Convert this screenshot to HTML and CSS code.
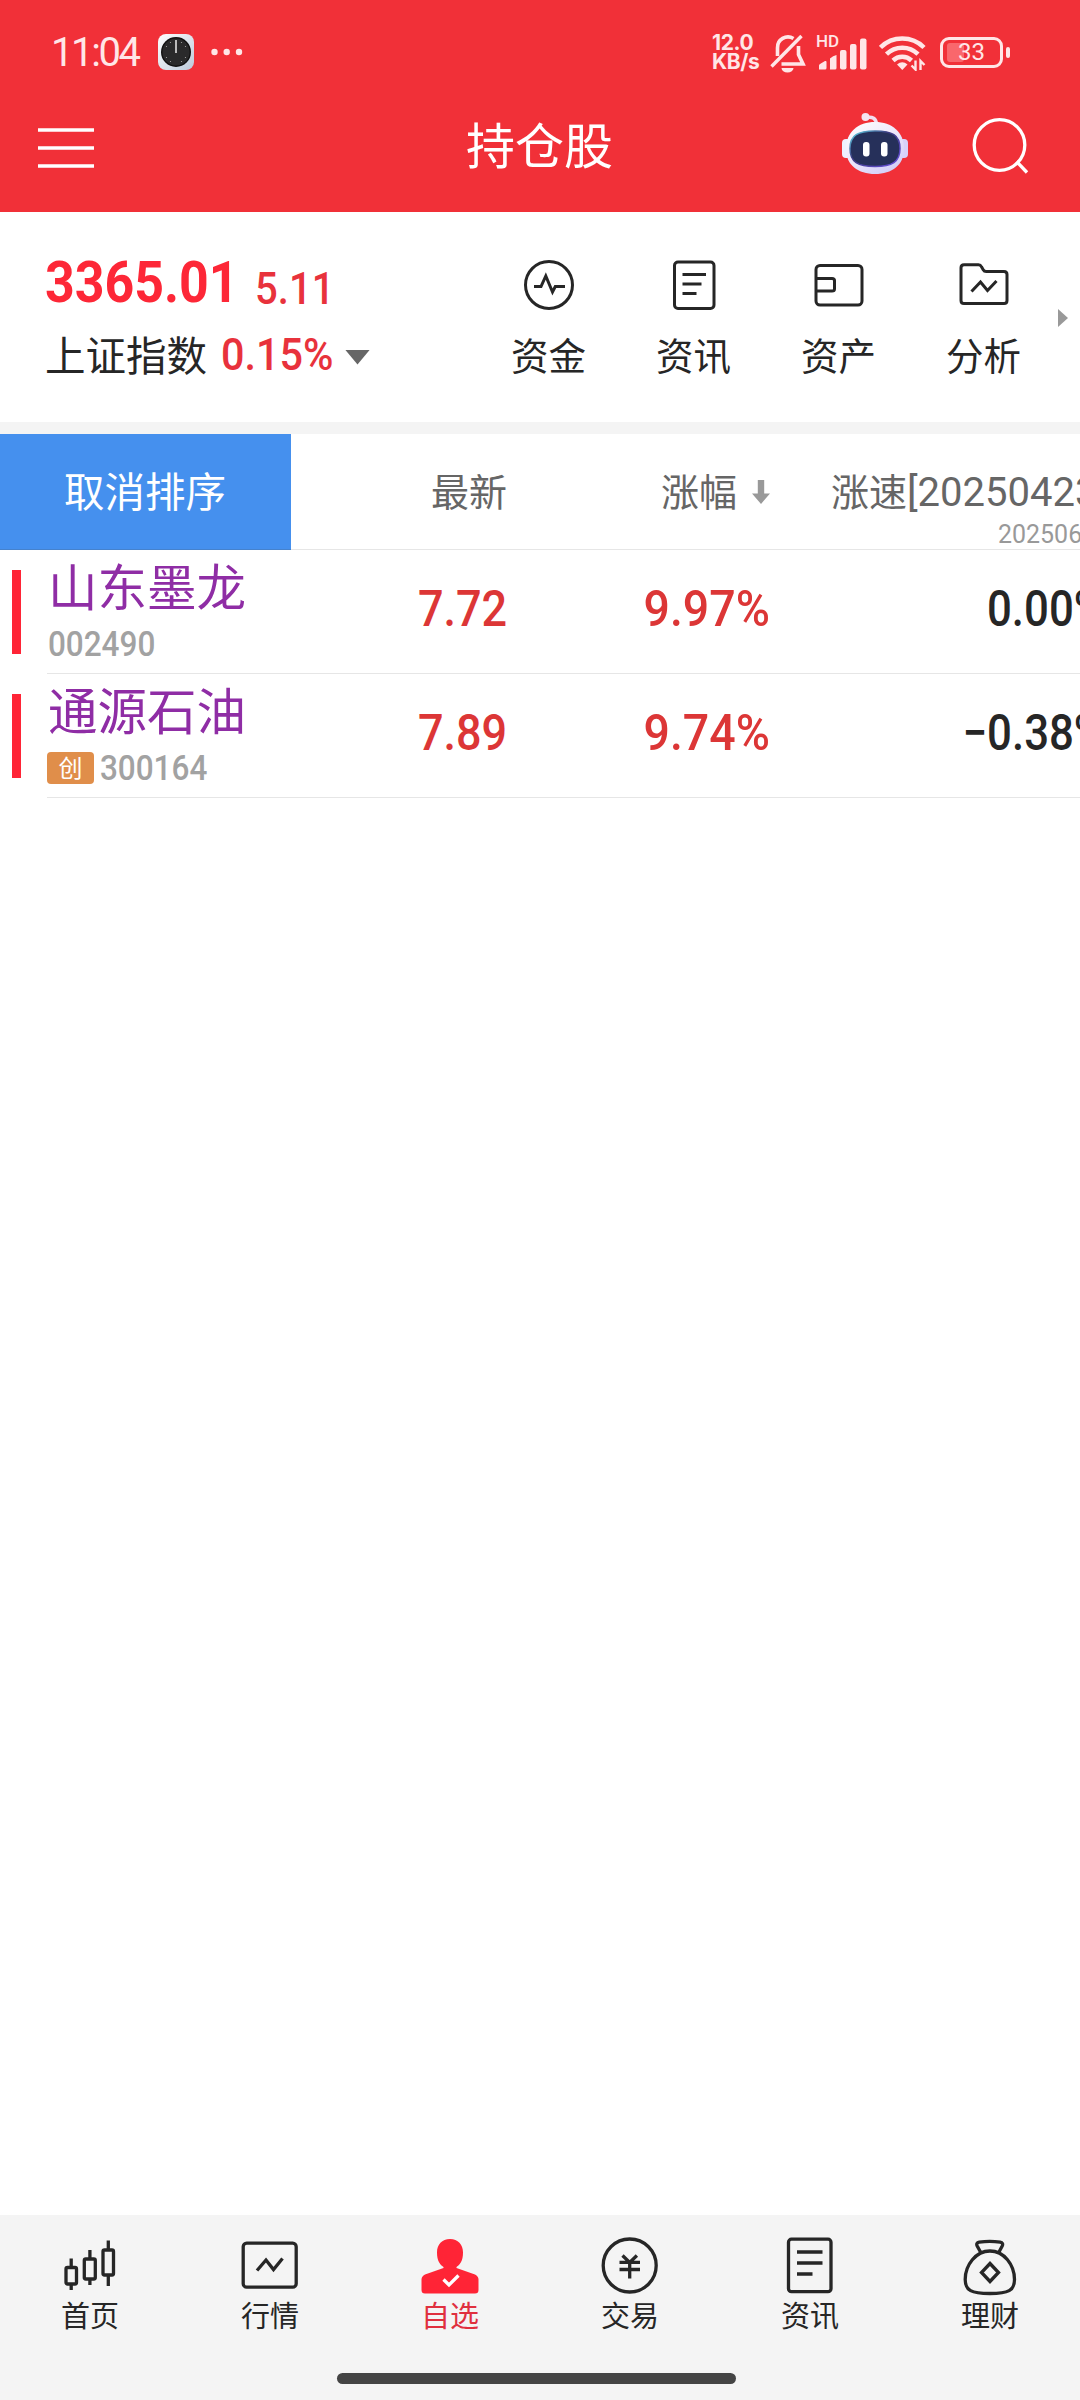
FILE: index.html
```html
<!DOCTYPE html>
<html lang="zh-CN">
<head>
<meta charset="utf-8">
<title>持仓股</title>
<link rel="stylesheet" href="styles.css">
</head>
<body>
<div class="app">
  <header class="top">
    <div class="status">
      <span class="time">11:04</span>
      <svg class="clock" width="36" height="36" viewBox="0 0 36 36">
        <defs><linearGradient id="cg" x1="0" y1="0" x2="1" y2="1"><stop offset="0" stop-color="#fff"/><stop offset="1" stop-color="#bccada"/></linearGradient></defs>
        <rect width="36" height="36" rx="8" fill="url(#cg)"/>
        <circle cx="18" cy="18" r="15" fill="#111"/><circle cx="18" cy="18" r="13.6" fill="#2a2a2b"/>
        <path d="M18 6v13" stroke="#bbb" stroke-width="2"/>
        <g fill="#aaa"><circle cx="8.500" cy="12.500" r=".6"/><circle cx="12.500" cy="8.500" r=".6"/><circle cx="23.500" cy="8.500" r=".6"/><circle cx="27.500" cy="12.500" r=".6"/><circle cx="8.500" cy="23.500" r=".6"/><circle cx="12.500" cy="27.500" r=".6"/><circle cx="23.500" cy="27.500" r=".6"/><circle cx="27.500" cy="23.500" r=".6"/></g>
      </svg>
      <svg class="dots" width="32" height="8" viewBox="0 0 32 8" fill="#ffe6e7"><circle cx="3.500" cy="4" r="3.200"/><circle cx="15.700" cy="4" r="3.200"/><circle cx="28" cy="4" r="3.200"/></svg>
      <div class="speed"><span>12.0</span><span>KB/s</span></div>
      <svg class="bell" width="36" height="40" viewBox="0 0 36 40" fill="none" stroke="#ffe6e7" stroke-width="3.600">
        <path d="M7.500 23V15a10.500 10.500 0 0 1 16-9.500M28.500 13v8.500l4.500 9.500H11.500"/><path d="M1.500 33.500L31.500 3" stroke-width="3.400"/>
        <path d="M11.500 35h12a6 4.500 0 0 1-12 0z" fill="#ffe6e7" stroke="none"/>
      </svg>
      <div class="signal">
        <span class="hd">HD</span>
        <svg width="48" height="32" viewBox="0 0 48 32" fill="#ffe6e7"><path d="M0 31.500v-4q0-1 1-1.500l5-3q1.500-.5 1.500 1v6q0 1.500-1.500 1.500zM11 31.500v-11q3-3 6.500-3.500v13q0 1.500-1.500 1.500z"/><rect x="21" y="12" width="6.500" height="19.500" rx="2"/><rect x="31" y="6" width="6.500" height="25.500" rx="2"/><rect x="41" y="0.500" width="6.500" height="31" rx="2"/></svg>
      </div>
      <svg class="wifi" width="48" height="36" viewBox="0 0 48 36" fill="none" stroke="#ffe6e7" stroke-width="4.500">
        <path d="M1.500 12.500a31 31 0 0 1 43.500 0M7.500 19.200a22.500 22.500 0 0 1 31.500 0M14 25.500a13.500 13.500 0 0 1 18.500 0"/>
        <path d="M18 29.500q5.200-4.500 10.500 0l-5.200 5.500z" fill="#ffe6e7" stroke="none"/>
        <path d="M36.500 25.500v9l-4-4M41.500 35v-9l4 4" stroke-width="2.400"/>
      </svg>
      <div class="battery"><span class="cell"><i class="level"></i><b>33</b></span><i class="nub"></i></div>
    </div>
    <div class="titlebar">
      <svg class="menu" width="56" height="40" viewBox="0 0 56 40"><path d="M0 2h56M0 20h56M0 38h56" stroke="#fff" stroke-width="3.600"/></svg>
      <h1>持仓股</h1>
      <svg class="robot" width="68" height="64" viewBox="0 0 68 64">
        <defs><linearGradient id="rg" x1="0" y1="0" x2=".7" y2="1"><stop offset="0" stop-color="#fff"/><stop offset=".5" stop-color="#efe9fc"/><stop offset="1" stop-color="#d3cff8"/></linearGradient>
        <linearGradient id="rb" x1="0" y1="0" x2="1" y2="1"><stop offset="0" stop-color="#62dce9"/><stop offset=".4" stop-color="#3b3a80"/><stop offset="1" stop-color="#6a4fe0"/></linearGradient></defs>
        <path d="M25 5.500q10-2 10.500 7" fill="none" stroke="#f2dff0" stroke-width="3.500"/><circle cx="24.500" cy="5" r="4" fill="#f4e4f2"/>
        <rect x="1" y="27" width="9" height="19" rx="4" fill="#eef0ff"/><rect x="58" y="27" width="9" height="19" rx="4" fill="#d8d2fa"/>
        <path d="M34 10c17 0 29 10 29 27 0 16-12 25-29 25S5 53 5 37C5 20 17 10 34 10z" fill="url(#rg)"/>
        <path d="M34 19c17 0 25 4 25 17.500C59 50 51 54.500 34 54.500S9 50 9 36.500C9 23 17 19 34 19z" fill="#26305a" stroke="url(#rb)" stroke-width="1.500"/>
        <rect x="22" y="30" width="6.500" height="14.500" rx="3" fill="#fff"/><rect x="40" y="30" width="6.500" height="14.500" rx="3" fill="#fff"/>
      </svg>
      <svg class="search" width="58" height="58" viewBox="0 0 58 58" fill="none" stroke="#fff" stroke-width="3.300"><circle cx="27.500" cy="28" r="25.300"/><path d="M44.500 44.500L55 55.500"/></svg>
    </div>
  </header>

  <section class="summary">
    <div class="index">
      <div class="line1"><span class="num price">3365.01</span><span class="num change">5.11</span></div>
      <div class="line2"><span class="iname">上证指数</span><span class="num pct">0.15%</span><i class="caret"></i></div>
    </div>
    <nav class="quick">
      <a><svg viewBox="0 0 52 52"><circle cx="26" cy="26" r="23.500"/><path d="M11 27.500h7l4.800-10.500 6.700 16 2.800-5.500H42"/></svg>资金</a>
      <a><svg viewBox="0 0 52 52"><rect x="6.500" y="3" width="39.500" height="46.500" rx="3.500"/><path d="M14.500 15.500h23.500M14.500 25h19M14.500 34.500h14"/></svg>资讯</a>
      <a><svg viewBox="0 0 52 52"><rect x="3" y="6.500" width="46" height="39.500" rx="4"/><path d="M3 19.500h16q2.500 0 2.500 2v8.500q0 2-2.500 2H3"/></svg>资产</a>
      <a><svg viewBox="0 0 52 52"><path d="M6 5.800h14.500q2 0 3 2l1.700 2.900q1 1.800 3 1.800H46q3 0 3 3V41.500q0 3-3 3H6q-3 0-3-3V8.800q0-3 3-3z"/><path d="M13.500 32.500l9-9.500 7 8.500L38.500 22"/></svg>分析</a>
    </nav>
    <i class="more"></i>
  </section>

  <main class="table">
    <div class="row head">
      <div class="cancel">取消排序</div>
      <div class="cell-r">最新</div>
      <div class="cell-r sort">涨幅<svg width="18" height="24" viewBox="0 0 18 24"><path d="M5.800 0h6.400v13.500H18L9 24 0 13.500h5.800z" fill="#999"/></svg></div>
      <div class="speedcol"><span class="t">涨速<span class="num">[20250423]</span></span><span class="num sub">20250610</span></div>
    </div>
    <div class="row stock">
      <div class="who"><i class="mark"></i><div class="names"><span class="sname">山东墨龙</span><span class="code"><span class="num">002490</span></span></div></div>
      <div class="val"><span class="num up">7.72</span></div>
      <div class="val"><span class="num up">9.97%</span></div>
      <div class="val"><span class="num">0.00%</span></div>
    </div>
    <div class="row stock">
      <div class="who"><i class="mark"></i><div class="names"><span class="sname">通源石油</span><span class="code"><em>创</em><span class="num">300164</span></span></div></div>
      <div class="val"><span class="num up">7.89</span></div>
      <div class="val"><span class="num up">9.74%</span></div>
      <div class="val"><span class="num">−0.38%</span></div>
    </div>
  </main>

  <footer class="bottom">
    <nav class="tabs">
      <a><svg viewBox="0 0 60 60"><g><rect x="6" y="31.500" width="10.500" height="16.500" rx="1.500"/><rect x="24.300" y="23" width="11" height="20" rx="1.500"/><rect x="43" y="14" width="10.500" height="25" rx="1.500"/></g><path d="M11.200 22.500v9M11.200 48v6M29.900 14v9M29.900 43v6M48.300 4.500v9.500M48.300 39v11"/></svg>首页</a>
      <a><svg viewBox="0 0 60 60"><rect x="3.200" y="7.200" width="53" height="44" rx="3.500"/><path d="M17 34.500l9-10.500 7.500 9.500L42.500 22.500"/></svg>行情</a>
      <a class="on"><svg viewBox="0 0 60 60"><path class="solid" d="M30 3c8 0 13 5.500 13 13.500 0 8.500-3 12-6.500 14.500v1l18.500 6.500q3.500 2 3.500 5V54q0 3.500-3.500 3.500H5q-3.500 0-3.500-3.500V43.500q0-3 3.500-5L23.500 32v-1c-3.500-2.500-6.500-6-6.500-14.500C17 8.500 22 3 30 3z"/><path class="tick" d="M23.500 43.500l5.500 5.500 9.500-9.500"/></svg>自选</a>
      <a><svg viewBox="0 0 60 60"><circle cx="29.700" cy="29.500" r="26.500"/><path d="M22.500 19.500l7.200 7 7.200-7M19.500 26.300h20.500M19.500 33.500h20.500M29.700 26v16.500"/></svg>交易</a>
      <a><svg viewBox="0 0 60 60"><rect x="8.500" y="3.200" width="42.500" height="52.500" rx="3"/><path d="M17 16h25.500M17 27h25.500M17 38h15.500"/></svg>资讯</a>
      <a><svg viewBox="0 0 60 60"><path d="M20.500 16l-3.300-6q-1.500-3.200 2-3.800 10.500-1.500 21 0 3.500.6 2 3.800L39 16M29.900 15C44 15 54.500 29 54.500 43.500c0 11-6 14-24.600 14S5.200 54.500 5.200 43.500C5.200 29 16 15 29.900 15z"/><path d="M30 27.500l8.500 9-8.500 9-8.500-9z"/></svg>理财</a>
    </nav>
    <i class="homebar"></i>
  </footer>
</div>
</body>
</html>
```
FILE: styles.css
```css
* { box-sizing: border-box; }
body {
  margin: 0;
  font-family: "Noto Sans CJK SC", "Noto Sans", sans-serif;
  color: #262626;
  background: #fff;
}
i, em { font-style: normal; display: block; }
svg { display: block; flex: none; }
.app { width: 1080px; height: 2400px; display: flex; flex-direction: column; overflow: hidden; }
.num { font-family: Roboto, sans-serif; display: inline-block; white-space: nowrap; transform: scaleX(.9); transform-origin: left center; }

/* header */
.top { height: 212px; background: #f13038; flex: none; }
.status { height: 104px; display: flex; align-items: center; padding-left: 51px; color: #ffe6e7; font-family: Roboto, sans-serif; }
.time { width: 107px; padding-top: 2px; font-size: 40px; line-height: 48px; letter-spacing: -2.4px; }
.dots { margin-left: 17px; }
.speed { display: flex; flex-direction: column; width: 58px; margin-left: 469px; font-size: 21px; line-height: 19px; font-weight: 700; font-family: Inter, sans-serif; letter-spacing: -.4px; }
.bell { margin-top: 2px; }
.signal { position: relative; margin-left: 13px; padding-top: 3px; }
.hd { position: absolute; left: -3px; top: -4px; font-size: 17px; line-height: 20px; font-weight: 500; }
.wifi { margin-left: 12px; margin-top: 2px; }
.battery { display: flex; align-items: center; gap: 3px; margin-left: 13px; }
.cell { position: relative; width: 63px; height: 31px; border: 3px solid #ffe6e7; border-radius: 9px; display: flex; align-items: center; justify-content: center; }
.level { position: absolute; left: 4px; top: 3px; width: 17px; height: 19px; border-radius: 3px; background: #f9676c; }
.cell b { position: relative; font-size: 24px; line-height: 25px; font-weight: 400; }
.nub { width: 4px; height: 11px; border-radius: 2px; background: #ffe6e7; }
.titlebar { height: 82px; padding: 0 50px 0 38px; display: flex; align-items: center; color: #fff; }
.menu { margin-top: 6px; }
.titlebar h1 { margin: -4px 0 0 372px; width: 148px; font-size: 49px; line-height: 72px; font-weight: 400; white-space: nowrap; }
.robot { margin-left: 228px; margin-top: -2px; }
.search { margin-left: 63px; margin-top: 2px; }

/* index summary */
.summary { height: 222px; border-bottom: 12px solid #f4f4f4; display: flex; flex: none; }
.index { width: 476px; padding: 38px 0 0 45px; }
.line1, .line2 { display: flex; align-items: baseline; color: #e8323c; }
.line1 { height: 73px; }
.line2 { height: 64px; align-items: center; }
.price { width: 210px; font-size: 57px; line-height: 66px; font-weight: 700; color: #fd2737; transform: scaleX(.91); }
.change { font-size: 44px; line-height: 66px; font-weight: 500; position: relative; top: 2px; transform: scaleX(.91); }
.iname { width: 176px; font-size: 40.500px; line-height: 56px; margin-top: -2px; color: #262626; white-space: nowrap; }
.pct { width: 124px; font-size: 44px; font-weight: 500; line-height: 58px; transform: scaleX(.94); }
.caret { width: 25px; height: 15px; margin-top: 4px; background: #666; clip-path: polygon(0 0, 100% 0, 50% 100%); }
.quick { display: flex; padding-top: 47px; }
.quick a { width: 145px; display: flex; flex-direction: column; align-items: center; font-size: 37.500px; line-height: 56px; }
.quick svg { width: 52px; height: 52px; margin-bottom: 15px; }
.quick svg, .tabs svg { fill: none; stroke: #262626; stroke-width: 3; }
.more { margin: 97px 0 0 2px; width: 10px; height: 18px; background: #999; clip-path: polygon(0 0, 100% 50%, 0 100%); }

/* table */
.table { flex: 1; }
.row { width: 1116px; display: grid; grid-template-columns: 291px 216px 263px 346px; }
.head { height: 116px; font-size: 38px; color: #666; }
.head > div { border-bottom: 1px solid #e6e6e6; line-height: 112px; }
.head .cancel { background: #4590ee; border-color: #4582cd; color: #fff; font-size: 40.500px; padding-left: 64px; }
.cell-r { text-align: right; }
.head .sort { display: flex; justify-content: flex-end; gap: 15px; }
.sort svg { margin-top: 46px; }
.speedcol { padding-left: 61px; white-space: nowrap; position: relative; }
.speedcol .t .num { font-size: 40px; transform: none; }
.speedcol .sub { position: absolute; left: 228px; top: 84px; font-size: 26px; line-height: 32px; color: #999; transform: scaleX(.96); }
.stock { height: 124px; }
.who { display: flex; }
.mark { width: 9px; height: 84px; margin: 20px 26px 0 12px; background: #ff2436; }
.names { flex: 1; display: flex; flex-direction: column; border-bottom: 1px solid #e6e6e6; white-space: nowrap; }
.sname { font-size: 49.500px; line-height: 70px; padding-left: 1px; color: #8f2da5; }
.code { display: flex; align-items: center; gap: 5px; height: 48px; color: #a2a2a2; font-size: 35px; line-height: 48px; }
.code .num { padding: 1px 0 0 1px; font-weight: 500; }
.code em { width: 47px; height: 32px; border-radius: 4px; background: #e08e4a; color: #fff; font-size: 24px; line-height: 30px; text-align: center; }
.val { height: 124px; text-align: right; border-bottom: 1px solid #e6e6e6; font-size: 50px; font-weight: 500; line-height: 109px; }
.val .num { transform-origin: right center; }
.val:nth-child(3) .num { transform: scaleX(.93); }
.val:nth-child(4) { padding-right: 10px; }
.val:nth-child(4) .num { transform: scaleX(.875); }
.up { color: #dc3636; }

/* bottom navigation */
.bottom { height: 185px; background: #f4f4f4; flex: none; display: flex; flex-direction: column; align-items: center; }
.tabs { display: flex; height: 158px; padding-top: 21px; }
.tabs a { width: 180px; display: flex; flex-direction: column; align-items: center; font-size: 29px; line-height: 40px; }
.tabs svg { width: 60px; height: 60px; margin-bottom: -2px; stroke-width: 3.300; }
.tabs .on { color: #e0303e; }
.tabs .solid { fill: #ff2436; stroke: none; }
.tabs .tick { stroke: #fff; }
.homebar { width: 399px; height: 11px; margin-left: -7px; border-radius: 6px; background: #444; }
```
